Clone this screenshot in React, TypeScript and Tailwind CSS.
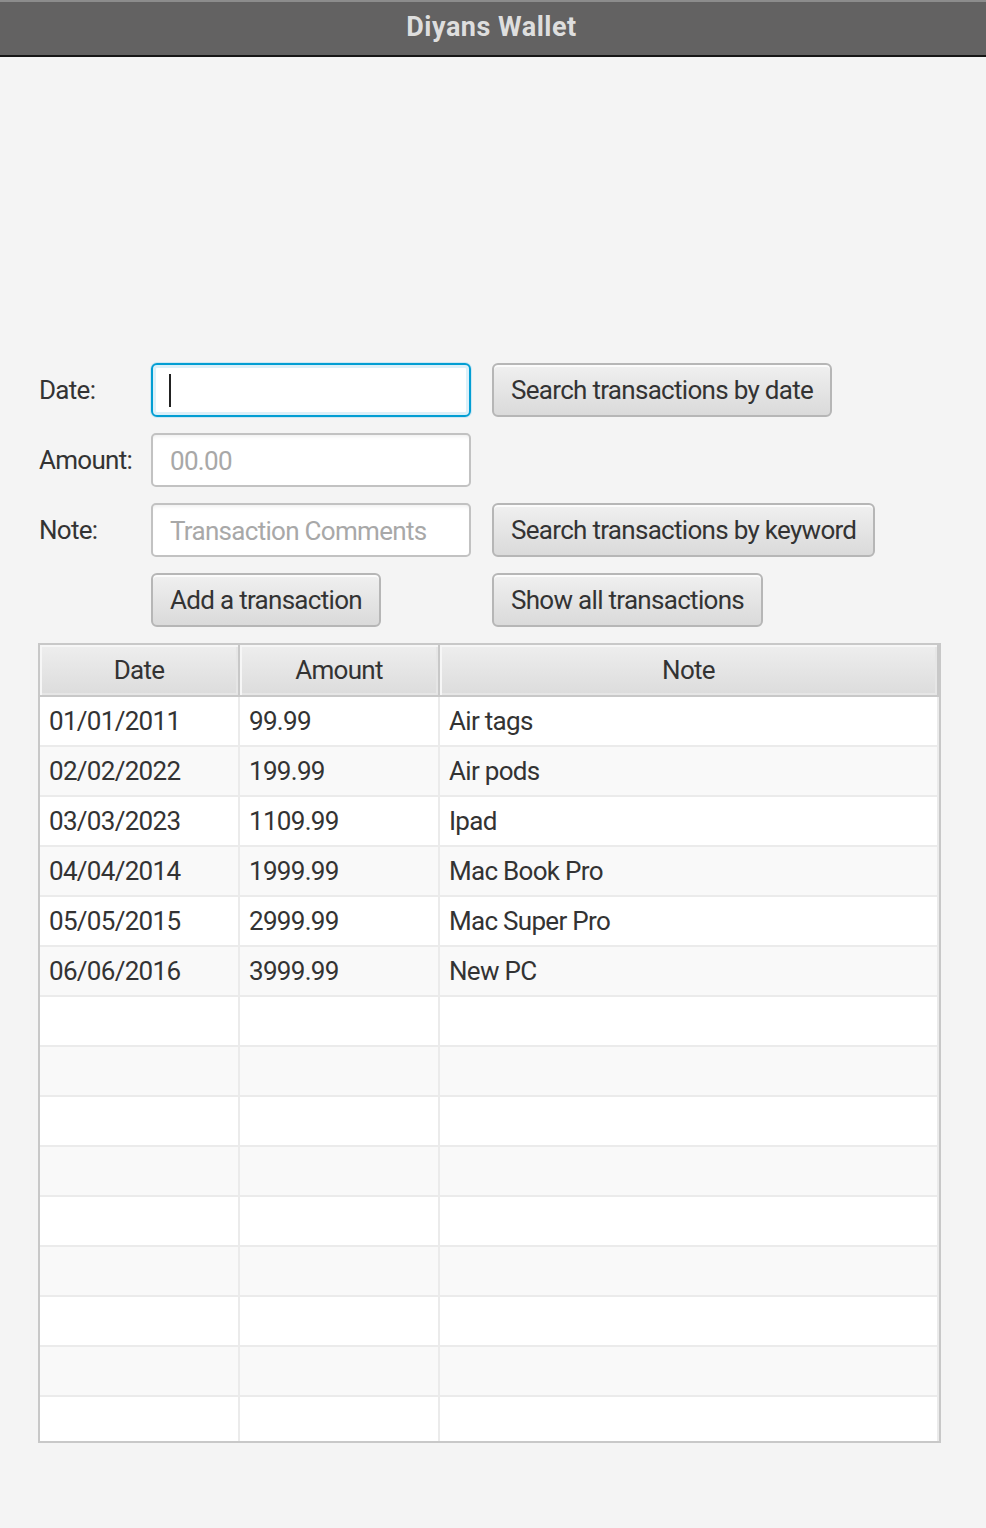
import { useState } from "react";

const rows = [
  { date: "01/01/2011", amount: "99.99", note: "Air tags" },
  { date: "02/02/2022", amount: "199.99", note: "Air pods" },
  { date: "03/03/2023", amount: "1109.99", note: "Ipad" },
  { date: "04/04/2014", amount: "1999.99", note: "Mac Book Pro" },
  { date: "05/05/2015", amount: "2999.99", note: "Mac Super Pro" },
  { date: "06/06/2016", amount: "3999.99", note: "New PC" },
];

const FxButton = ({ label }: { label: string }) => (
  <button className="justify-self-start h-[54px] px-[17px] pt-px rounded-[6px] border-2 border-[#b6b6b6] bg-linear-to-b from-[#f0f0f0] to-[#dadada] shadow-[inset_0_2px_0_rgba(255,255,255,0.75)] text-[26px] text-[#333] tracking-[-0.7px] whitespace-nowrap">
    {label}
  </button>
);

const App = () => {
  const [amount, setAmount] = useState("");
  const [note, setNote] = useState("");

  const filler = Array.from({ length: 9 }, () => ({ date: "", amount: "", note: "" }));
  const allRows = [...rows, ...filler];

  return (
    <div className="min-h-[1528px] bg-[#f4f4f4] font-[Roboto,'Liberation_Sans',sans-serif] text-[#333]">
      <div className="h-[57px] border-t-2 border-t-[#8c8c8c] border-b-2 border-b-[#161616] bg-[#636262] flex items-center justify-center">
        <h1 className="text-[27px] font-bold text-[#dedede] tracking-[0.5px] pb-[3px] pr-[3px]">Diyans Wallet</h1>
      </div>

      <div className="pt-[306px] px-[38px]">
        <div className="grid grid-cols-[113px_341px_auto] auto-rows-[54px] gap-y-[16px] items-center">
          <label className="pl-px pt-px text-[26px] tracking-[-0.7px]">Date:</label>
          <div className="relative w-[320px] h-[54px] rounded-[6px] border-2 border-[#039ed3] bg-white shadow-[0_0_0_1px_#cfe8f3,inset_0_0_0_3px_#dcf0f9]">
            <span className="absolute left-[16px] top-[9px] w-[2px] h-[33px] bg-[#222]" />
          </div>
          <FxButton label="Search transactions by date" />

          <label className="pl-px pt-px text-[26px] tracking-[-0.7px]">Amount:</label>
          <input
            value={amount}
            onChange={(e) => setAmount(e.target.value)}
            placeholder="00.00"
            className="h-[54px] w-[320px] rounded-[5px] border-2 border-[#c2c2c2] bg-white pl-[17px] pt-px text-[26px] tracking-[-0.7px] outline-none shadow-[inset_0_4px_4px_-3px_rgba(0,0,0,0.08)] placeholder:text-[#a8a8a8]"
          />
          <div />

          <label className="pl-px pt-px text-[26px] tracking-[-0.7px]">Note:</label>
          <input
            value={note}
            onChange={(e) => setNote(e.target.value)}
            placeholder="Transaction Comments"
            className="h-[54px] w-[320px] rounded-[5px] border-2 border-[#c2c2c2] bg-white pl-[17px] pt-px text-[26px] tracking-[-0.7px] outline-none shadow-[inset_0_4px_4px_-3px_rgba(0,0,0,0.08)] placeholder:text-[#a8a8a8]"
          />
          <FxButton label="Search transactions by keyword" />

          <div />
          <FxButton label="Add a transaction" />
          <FxButton label="Show all transactions" />
        </div>

        <div className="mt-[16px] w-[903px] h-[800px] border-2 border-[#c8c8c8] bg-white overflow-hidden">
          <div className="grid grid-cols-[200px_200px_1fr] h-[52px] border-b-2 border-[#c8c8c8]">
            {["Date", "Amount", "Note"].map((h) => (
              <div
                key={h}
                className="flex items-center justify-center pt-px border-r-2 border-[#c8c8c8] bg-linear-to-b from-[#eeeeee] to-[#dcdcdc] shadow-[inset_2px_2px_0_#f6f6f6,inset_-2px_-2px_0_#e6e6e6] text-[26px] tracking-[-0.7px]"
              >
                {h}
              </div>
            ))}
          </div>
          {allRows.map((r, i) => (
            <div
              key={i}
              className={`grid grid-cols-[200px_200px_1fr] h-[50px] border-b-2 border-[#ebebeb] ${
                i % 2 === 1 ? "bg-[#f9f9f9]" : "bg-white"
              }`}
            >
              <div className="flex items-center pl-[9px] pt-px border-r-2 border-[#ebebeb] text-[26px] tracking-[-0.7px]">{r.date}</div>
              <div className="flex items-center pl-[9px] pt-px border-r-2 border-[#ebebeb] text-[26px] tracking-[-0.7px]">{r.amount}</div>
              <div className="flex items-center pl-[9px] pt-px border-r-2 border-[#ebebeb] text-[26px] tracking-[-0.7px]">{r.note}</div>
            </div>
          ))}
        </div>
      </div>
    </div>
  );
};

export default App;
